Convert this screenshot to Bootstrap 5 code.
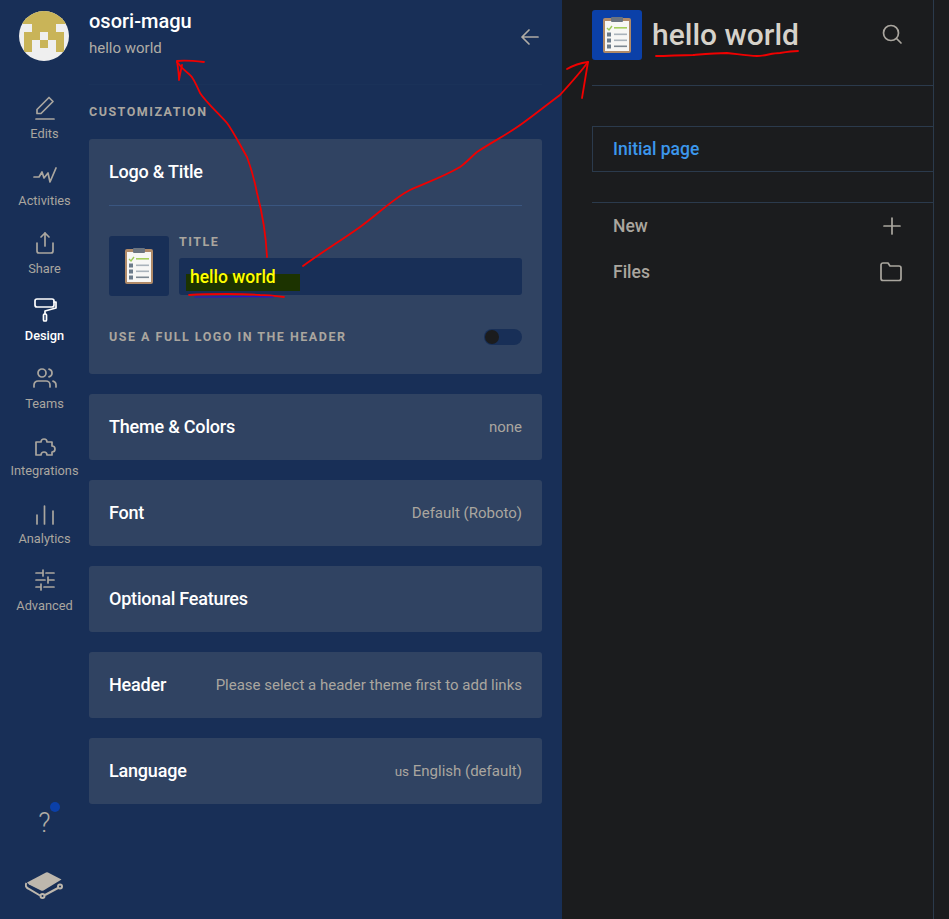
<!DOCTYPE html>
<html lang="en">
<head>
    <meta charset="UTF-8">
    <meta name="viewport" content="width=device-width, initial-scale=1.0">
    <title>hello world - Customization</title>
    <link href="https://cdn.jsdelivr.net/npm/bootstrap@5.3.2/dist/css/bootstrap.min.css" rel="stylesheet">
    <style>
        body { font-family: Roboto, "Liberation Sans", sans-serif; background: #1b1c1e; color: #b0aca5; height: 919px; overflow: hidden; }
        svg { display: block; }
        .line-ico { fill: none; stroke: currentColor; stroke-width: 1.7; stroke-linecap: round; stroke-linejoin: round; }

        .side-panel { width: 562px; background: #182f57; height: 919px; }
        .icon-rail { width: 89px; padding-top: 11px; padding-bottom: 20px; }
        .avatar-pic { width: 50px; height: 50px; margin-left: 19px; margin-bottom: 34.500px; flex-shrink: 0; }
        .rail-item { height: 47px; margin-bottom: 20.500px; font-size: 12.800px; line-height: 18px; color: #aaa69f; text-align: center; white-space: nowrap; }
        .rail-item svg { margin: 0 auto 5px; }
        .rail-item.is-on { color: #fff; font-weight: 500; }
        .help-btn { font-size: 27px; font-weight: 300; line-height: 30px; color: #b0aca5; text-align: center; position: relative; margin-bottom: 34px; }
        .help-dot { position: absolute; width: 10px; height: 10px; border-radius: 50%; background: #0b40a8; top: -6px; left: 50px; }
        .book-logo { margin-left: 25px; flex-shrink: 0; }

        .custom-col { width: 453px; }
        .head-block { height: 85px; padding-top: 9px; border-bottom: 1px solid #1a3259; }
        .org-name { font-size: 20px; font-weight: 500; color: #fff; line-height: 24px; }
        .org-sub { font-size: 15px; line-height: 20px; margin-top: 5px; color: #b0aca5; }
        .back-arrow { margin-top: 16px; margin-right: 2px; }
        .caps-label { font-size: 12.500px; font-weight: 700; letter-spacing: 1.500px; line-height: 16px; color: #aaa69f; text-transform: uppercase; }
        .section-label { margin-top: 19px; margin-bottom: 19px; }

        .cfg-card { background: #304362; border: 0; border-radius: 3px; margin-bottom: 20px; color: #fff; }
        .cfg-row { height: 66px; padding: 0 20px 2px; }
        .cfg-title { font-size: 18px; font-weight: 500; letter-spacing: -.2px; color: #fff; }
        .cfg-value { font-size: 15px; color: #aaa69f; margin-top: 2px; }
        .cfg-value small { font-size: 13.500px; }
        .logo-head { height: 67px; margin: 0 20px; padding-bottom: 2px; border-bottom: 1px solid #3a5680; }
        .logo-body { padding: 30px 20px 0; height: 168px; }
        .logo-tile { width: 60px; height: 60px; background: #182f57; border-radius: 3px; }
        .title-box { margin-top: -2px; }
        .title-input { height: 37px; background: #182f57; border-radius: 3px; margin-top: 8px; padding-left: 11px; font-size: 17.500px; font-weight: 500; line-height: 38px; color: #ff0; position: relative; }
        .title-input span { position: relative; }
        .hl-mark { position: absolute; left: 7px; top: 16px; width: 114px; height: 17px; background: #1c3300; }
        .full-logo-row { margin-top: 32px; }
        .full-logo-row .caps-label { padding-top: 1px; }
        .toggle-track { width: 38px; height: 16px; border-radius: 8px; background: #182f57; }
        .toggle-knob { width: 14px; height: 14px; border-radius: 50%; background: #1b1c1e; margin: 1px; }

        .preview-panel { width: 342px; margin-left: 30px; height: 919px; border-right: 1px solid #2b3a4c; color: #aaa69f; }
        .brand-row { height: 86px; padding-top: 10px; padding-right: 29px; border-bottom: 1px solid #2b3a4c; }
        .brand-tile { width: 50px; height: 50px; background: #0b40a8; border-radius: 3px; }
        .brand-name { font-size: 30px; font-weight: 500; color: #d6d2ca; line-height: 50px; margin-left: 10px; }
        .page-link-box { height: 46px; margin-top: 40px; margin-bottom: 30px; border: 1px solid #2b3a4c; border-right: 0; padding-left: 20px; line-height: 44px; font-size: 17.500px; font-weight: 500; color: #3c97ec; }
        .nav-rows { border-top: 1px solid #2b3a4c; padding: 0 31px 0 21px; }
        .nav-line { height: 46px; font-size: 17.500px; font-weight: 500; }
        .ink-layer { position: absolute; top: 0; left: 0; pointer-events: none; }
    </style>
</head>
<body>

<!-- clipboard emoji, used twice -->
<svg width="0" height="0" class="position-absolute">
    <symbol id="clipboard" viewBox="0 0 28 36">
        <rect x="0" y="1" width="28" height="35" rx="2" fill="#b08a68"/>
        <rect x="2" y="4" width="24" height="30" fill="#f7f7f5"/>
        <rect x="8" y="0" width="12" height="5" rx="1" fill="#6b7480"/>
        <path d="M4 11l2 2 3-4" fill="none" stroke="#9cc95a" stroke-width="1.400"/>
        <rect x="11" y="10" width="13" height="1.600" fill="#a5cf5c"/>
        <rect x="4" y="15.500" width="4" height="4" fill="#6b7b8a"/>
        <rect x="11" y="16.500" width="13" height="1.600" fill="#a9b3bb"/>
        <rect x="4" y="21.500" width="4" height="4" fill="#6b7b8a"/>
        <rect x="11" y="22.500" width="13" height="1.600" fill="#a9b3bb"/>
        <rect x="4" y="27.500" width="4" height="4" fill="#6b7b8a"/>
        <rect x="11" y="28.500" width="13" height="1.600" fill="#7c8892"/>
    </symbol>
</svg>

<div class="d-flex">
    <!-- left panel -->
    <aside class="side-panel d-flex flex-shrink-0">
        <nav class="icon-rail d-flex flex-column flex-shrink-0">
            <svg class="avatar-pic" viewBox="0 0 50 50">
                <defs><clipPath id="disc"><circle cx="25" cy="25" r="25"/></clipPath></defs>
                <g clip-path="url(#disc)">
                    <rect width="50" height="50" fill="#efefef"/>
                    <path fill="#c9b458" d="M0 0h50v13H37v8h8v20h-8V29h-8v-8h-8v8h8v8h-8v-8h-8v12H5V21h8v-8H0z"/>
                </g>
            </svg>

            <div class="rail-item">
                <svg class="line-ico" width="24" height="24" viewBox="0 0 24 24"><path d="M16 1.500l4 4L8 17.500H4v-4z"/><path d="M3 23h18"/></svg>
                Edits
            </div>
            <div class="rail-item">
                <svg class="line-ico" width="24" height="24" viewBox="0 0 24 24"><path d="M1 14h5l3-5 2 6 4-5 2 9 6-14"/></svg>
                Activities
            </div>
            <div class="rail-item">
                <svg class="line-ico" width="24" height="24" viewBox="0 0 24 24"><path d="M4 12v8a2 2 0 0 0 2 2h12a2 2 0 0 0 2-2v-8"/><path d="M16 6l-4-4-4 4"/><path d="M12 2v13"/></svg>
                Share
            </div>
            <div class="rail-item is-on">
                <svg class="line-ico" width="24" height="24" viewBox="0 0 24 24"><rect x="2" y="1" width="19" height="8" rx="2"/><path d="M21 4h2v6l-11 3v3"/><rect x="10.500" y="16" width="3" height="7" rx="1"/></svg>
                Design
            </div>
            <div class="rail-item">
                <svg class="line-ico" width="24" height="24" viewBox="0 0 24 24"><path d="M17 21v-2a4 4 0 0 0-4-4H5a4 4 0 0 0-4 4v2"/><circle cx="9" cy="7" r="4"/><path d="M23 21v-2a4 4 0 0 0-3-3.870"/><path d="M16 3.130a4 4 0 0 1 0 7.750"/></svg>
                Teams
            </div>
            <div class="rail-item">
                <svg class="line-ico" width="24" height="24" viewBox="0 0 24 24"><path d="M3 22V9h5a3 3 0 1 1 6 0h5v4a3 3 0 1 1 0 6v3h-5a3 3 0 1 0-6 0z"/></svg>
                Integrations
            </div>
            <div class="rail-item">
                <svg class="line-ico" width="24" height="24" viewBox="0 0 24 24"><path d="M4 14v9"/><path d="M11.500 5v18"/><path d="M20 10v13"/></svg>
                Analytics
            </div>
            <div class="rail-item">
                <svg class="line-ico" width="24" height="24" viewBox="0 0 24 24"><path d="M3 5h7M13 5h8M10 2v6"/><path d="M3 12h9M15 12h6M15 9v6"/><path d="M3 19h5M11 19h10M8 16v6"/></svg>
                Advanced
            </div>

            <div class="help-btn mt-auto">?<span class="help-dot"></span></div>
            <svg class="book-logo" width="38" height="27" viewBox="0 0 38 27">
                <path fill="#bdb7ad" d="M2 10.500L21 .500Q22 0 23 .500L36.500 7.500 18.500 18.500Q17 19 16 18.500L4 12.500z"/>
                <path fill="none" stroke="#bdb7ad" stroke-width="2" d="M1.500 11C0 13 1 15.500 3 16.500L15 23.500M20 23l13-7"/>
                <circle cx="17.500" cy="24" r="2" fill="none" stroke="#bdb7ad" stroke-width="2"/>
                <circle cx="35" cy="14.500" r="2" fill="none" stroke="#bdb7ad" stroke-width="2"/>
            </svg>
        </nav>

        <main class="custom-col">
            <div class="head-block d-flex justify-content-between">
                <div>
                    <div class="org-name">osori-magu</div>
                    <div class="org-sub">hello world</div>
                </div>
                <svg class="back-arrow line-ico" width="20" height="24" viewBox="0 0 20 24"><path d="M18 12H2M9 5l-7 7 7 7"/></svg>
            </div>

            <div class="caps-label section-label">Customization</div>

            <section class="card cfg-card">
                <div class="logo-head d-flex align-items-center cfg-title">Logo &amp; Title</div>
                <div class="logo-body">
                    <div class="d-flex" style="gap:10px">
                        <div class="logo-tile d-flex align-items-center justify-content-center flex-shrink-0">
                            <svg width="28" height="36"><use href="#clipboard"/></svg>
                        </div>
                        <div class="title-box flex-grow-1">
                            <div class="caps-label">Title</div>
                            <div class="title-input"><div class="hl-mark"></div><span>hello world</span></div>
                        </div>
                    </div>
                    <div class="full-logo-row d-flex justify-content-between align-items-center">
                        <div class="caps-label">Use a full logo in the header</div>
                        <div class="toggle-track d-flex"><div class="toggle-knob"></div></div>
                    </div>
                </div>
            </section>

            <section class="card cfg-card cfg-row flex-row align-items-center justify-content-between">
                <div class="cfg-title">Theme &amp; Colors</div><div class="cfg-value">none</div>
            </section>
            <section class="card cfg-card cfg-row flex-row align-items-center justify-content-between">
                <div class="cfg-title">Font</div><div class="cfg-value">Default (Roboto)</div>
            </section>
            <section class="card cfg-card cfg-row flex-row align-items-center justify-content-between">
                <div class="cfg-title">Optional Features</div>
            </section>
            <section class="card cfg-card cfg-row flex-row align-items-center justify-content-between">
                <div class="cfg-title">Header</div><div class="cfg-value">Please select a header theme first to add links</div>
            </section>
            <section class="card cfg-card cfg-row flex-row align-items-center justify-content-between">
                <div class="cfg-title">Language</div><div class="cfg-value"><small>us</small> English (default)</div>
            </section>
        </main>
    </aside>

    <!-- preview -->
    <div class="preview-panel flex-shrink-0">
        <div class="brand-row d-flex justify-content-between">
            <div class="d-flex">
                <div class="brand-tile d-flex align-items-center justify-content-center">
                    <svg width="28" height="36"><use href="#clipboard"/></svg>
                </div>
                <div class="brand-name">hello world</div>
            </div>
            <svg class="line-ico mt-2" width="24" height="34" viewBox="0 0 24 34"><circle cx="11" cy="15" r="7.500"/><path d="M21 25l-4.500-4.500"/></svg>
        </div>
        <div class="page-link-box">Initial page</div>
        <div class="nav-rows">
            <div class="nav-line d-flex justify-content-between align-items-center">
                <span>New</span>
                <svg class="line-ico" width="20" height="20" viewBox="0 0 20 20"><path d="M10 2v16M2 10h16"/></svg>
            </div>
            <div class="nav-line d-flex justify-content-between align-items-center">
                <span>Files</span>
                <svg class="line-ico" width="22" height="20" viewBox="0 0 22 20"><path d="M21 16.500a2 2 0 0 1-2 2H3a2 2 0 0 1-2-2V3a2 2 0 0 1 2-2h5l2 3h9a2 2 0 0 1 2 2z"/></svg>
            </div>
        </div>
    </div>
</div>

<!-- hand drawn annotations over the screenshot -->
<svg class="ink-layer" width="949" height="919" viewBox="0 0 949 919" fill="none" stroke-linecap="round" stroke-linejoin="round">
    <g stroke="#f00000" stroke-width="1.800">
        <path d="M267 257C266 235 262 212 257 193C254 178 250 165 247 157C240 145 233 131 227 123C216 111 206 102 200 93C196 84 193 77 190 75C185 71 180 66 177 62"/>
        <path d="M204 62C195 61 186 60 177 61C178 68 179 74 179 80C180 74 181 70 182 65"/>
        <path d="M303 266C322 252 342 240 360 227C378 214 394 198 410 190C428 182 445 176 460 167C466 163 471 157 477 152C492 142 508 134 523 123C537 113 549 103 560 95C570 84 580 73 588 62"/>
        <path d="M567 69C574 65 581 63 588 62C586 74 584 86 582 98"/>
        <path d="M656 56C668 56 681 55 693 55C705 54 716 53 727 53C737 54 747 56 757 56C765 56 772 53 780 53C786 52 792 51 798 51"/>
        <path d="M189 295C202 294 214 294 227 294C238 294 249 294 260 295C268 295 276 296 284 297"/>
    </g>
    <path d="M195 297C221 297 247 296 273 297" stroke="#2a12c8" stroke-width="1.200"/>
</svg>

<script src="https://cdn.jsdelivr.net/npm/bootstrap@5.3.2/dist/js/bootstrap.bundle.min.js"></script>
</body>
</html>
